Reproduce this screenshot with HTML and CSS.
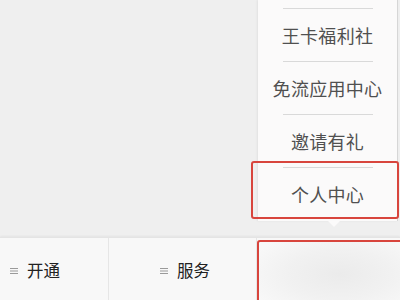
FILE: index.html
```html
<!DOCTYPE html>
<html lang="zh">
<head>
<meta charset="utf-8">
<link rel="stylesheet" href="styles.css">
</head>
<body>
<div class="screen">
  <div class="content">
    <div class="menu">
      <div class="sep"></div>
      <div class="item">王卡福利社</div>
      <div class="sep"></div>
      <div class="item">免流应用中心</div>
      <div class="sep"></div>
      <div class="item">邀请有礼</div>
      <div class="sep"></div>
      <div class="item">个人中心</div>
      <div class="arrow"></div>
    </div>
    <div class="highlight"></div>
  </div>
  <div class="tabbar">
    <div class="tab tab1">
      <svg class="ico" width="8" height="8" viewBox="0 0 8 8"><path d="M0 1.5H8M0 4H8M0 6.5H8" stroke="#9a9a9a" stroke-width="1"/></svg>
      <span>开通</span>
    </div>
    <div class="tab tab2">
      <svg class="ico" width="8" height="8" viewBox="0 0 8 8"><path d="M0 1.5H8M0 4H8M0 6.5H8" stroke="#9a9a9a" stroke-width="1"/></svg>
      <span>服务</span>
    </div>
    <div class="tab tab3">
      <div class="blur"></div>
    </div>
  </div>
</div>
</body>
</html>
```

FILE: styles.css
```css
html, body {
  margin: 0;
  padding: 0;
}
body {
  width: 400px;
  height: 300px;
  overflow: hidden;
  background: #efefef;
  font-family: "Noto Sans CJK SC", "Noto Sans", sans-serif;
}
.screen {
  display: flex;
  flex-direction: column;
  width: 400px;
  height: 300px;
}
.content {
  position: relative;
  height: 237px;
  flex: none;
}
.menu {
  position: absolute;
  left: 258px;
  top: 0;
  width: 140px;
  height: 221px;
  background: #fbfafa;
  border-right: 1px solid #d6d6d6;
  box-sizing: border-box;
  box-shadow: -1px 0 2px rgba(0,0,0,0.06);
  padding-top: 8px;
  display: flex;
  flex-direction: column;
  align-items: center;
}
.sep {
  width: 90px;
  height: 1px;
  background: #d9d9d9;
  flex: none;
}
.item {
  height: 52px;
  display: flex;
  align-items: center;
  justify-content: center;
  font-size: 18px;
  color: #505050;
  letter-spacing: 0.3px;
  flex: none;
}
.arrow {
  position: absolute;
  left: 70px;
  bottom: -6px;
  width: 0;
  height: 0;
  border-left: 6px solid transparent;
  border-right: 6px solid transparent;
  border-top: 6px solid #fbfafa;
}
.highlight {
  position: absolute;
  left: 251px;
  top: 161px;
  width: 148px;
  height: 58px;
  box-sizing: border-box;
  border: 2px solid #d8453d;
  border-radius: 3px;
}
.tabbar {
  flex: 1;
  display: flex;
  background: #f8f8f8;
  box-shadow: 0 -1px 2px rgba(0,0,0,0.05);
  border-top: 1px solid #e4e4e4;
}
.tab {
  display: flex;
  align-items: center;
  font-size: 16.5px;
  color: #222;
  padding-top: 2px;
}
.tab .ico {
  margin-right: 9px;
  margin-top: 1px;
}
.tab1 {
  width: 109px;
  border-right: 1px solid #e6e6e6;
  padding-left: 10px;
  box-sizing: border-box;
}
.tab2 {
  width: 148px;
  border-right: 1px solid #e6e6e6;
  padding-left: 51px;
  box-sizing: border-box;
}
.tab3 {
  flex: 1;
  position: relative;
}
.blur {
  position: absolute;
  left: 0;
  top: 2px;
  right: -4px;
  bottom: -4px;
  border: 2px solid #d8453d;
  border-radius: 3px;
  background: radial-gradient(ellipse 95px 45px at 80px 32px, #ebebeb 0%, #f1f1f1 55%, #f8f8f8 100%);
}
```
